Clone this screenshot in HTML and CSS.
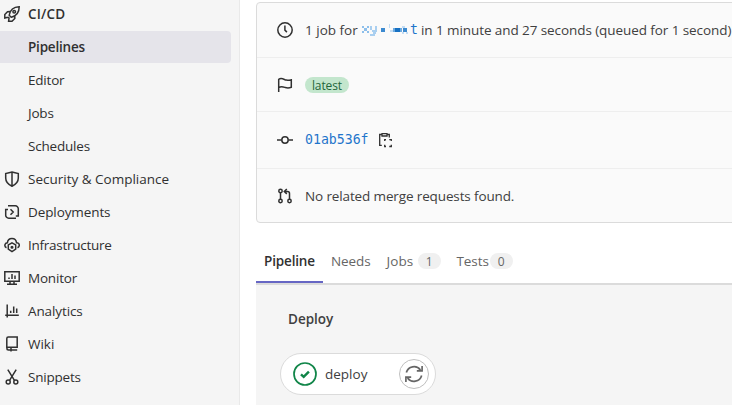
FILE: index.html
```html
<!DOCTYPE html>
<html lang="en">
<head>
<meta charset="utf-8">
<title>Pipeline</title>
<link rel="stylesheet" href="styles.css">
</head>
<body>
<div class="app">
  <nav class="sidebar">
    <a class="item top strong"><svg class="icon" viewBox="0 0 16 16"><path d="M5.2 9.2C6 4.600 9 1 15.200.8 15.200 6.500 12 10.200 7.200 11.200zM6 5.500 3.500 5.700.8 8.500V12l3-.8M10.800 10v2.500L8 15.200H4.600l.4-3M4 11l1.500 1.500"/><circle cx="10.200" cy="5.800" r="1.300"/></svg><span class="label cicd">CI/CD</span></a>
    <a class="item sub active strong"><span class="label">Pipelines</span></a>
    <a class="item sub"><span class="label">Editor</span></a>
    <a class="item sub"><span class="label">Jobs</span></a>
    <a class="item sub"><span class="label">Schedules</span></a>
    <a class="item"><svg class="icon" viewBox="0 0 16 16"><path d="M8 .9 14.300 2.500V7c0 4-2.500 6.500-6.300 8.200C4.200 13.500 1.700 11 1.700 7V2.500zM8 1v14"/></svg><span class="label security">Security &amp; Compliance</span></a>
    <a class="item"><svg class="icon" viewBox="0 0 16 16"><path d="M4 1.800h7.300a3 3 0 0 1 3 3V10M12 14.200H4.700a3 3 0 0 1-3-3V5.500H4M14.300 8.500V12h-2.500M6.500 5.300 9.200 8l-2.700 2.700"/></svg><span class="label deployments">Deployments</span></a>
    <a class="item"><svg class="icon" viewBox="0 0 16 16"><path d="M2.500 10.700C0 9.500.4 6 3.400 5.800 4 .2 11.800.1 12.500 5.700c3.200 0 3.700 3.700 1 5M8 5.800l3.700 2.100v4.300L8 14.600l-3.700-2.400V7.900z"/><circle cx="8" cy="10.200" r=".8"/></svg><span class="label infrastructure">Infrastructure</span></a>
    <a class="item"><svg class="icon" viewBox="0 0 16 16"><path d="M.8 1.700h14.400v9.600H.8zM3 14.300h10M6 11.500v2.700M10 11.500v2.700M5 7.500V9M8 4v5M11 5.500V9"/></svg><span class="label">Monitor</span></a>
    <a class="item"><svg class="icon" viewBox="0 0 16 16"><path d="M3.200 1.500v13M1.200 12.300h13.600M6.700 7.800V10M9.700 3.500V10M12.700 5.500V10"/></svg><span class="label deployments">Analytics</span></a>
    <a class="item"><svg class="icon" viewBox="0 0 16 16"><path d="M13.200 11.300H4.500a1.700 1.700 0 0 0-1.700 1.500V2.500A1.500 1.500 0 0 1 4.300 1h8.900v10.300zM2.800 12.500c0 1 .7 1.500 1.700 1.500h8.700M7 12v3.500"/></svg><span class="label security">Wiki</span></a>
    <a class="item"><svg class="icon" viewBox="0 0 16 16"><path d="m3.800.7 6.800 11M12.200.7l-6.800 11"/><circle cx="4.200" cy="13" r="2"/><circle cx="11.800" cy="13" r="2"/></svg><span class="label">Snippets</span></a>
  </nav>
  <main class="content">
    <section class="card">
      <div class="row summary"><svg class="icon" viewBox="0 0 16 16"><circle cx="8" cy="8" r="7.200"/><path d="M7.900 3.500v4.600l2 2"/></svg><span class="text before">1 job for</span><span class="name"><svg viewBox="0 0 48 12"><path fill="#8dbfeb" d="M0 2h2v2H0zM5 2h2v2H5zM2 4h3v3H2zM0 7h2v2H0zM5 7h2v2H5z"/><path fill="#a9cff0" d="M8 2h2v4H8zM13 2h2v6h-2zM10 6h3v2h-3zM11 8h3v2h-3zM8 10h5v2H8z"/><path fill="#3c8ad0" d="M19 4h4v4h-4zM41 4h4v4h-4z"/><path fill="#c2dcf3" d="M27 0h1v4h-1zM28 6h3v2h-3zM40 2h3v2h-3zM40 8h2v2h-2zM44 8h2v2h-2z"/><path fill="#1670c2" d="M33 4h5v4h-5z"/><path fill="#6caae0" d="M31 4h2v4h-2zM38 4h2v4h-2z"/></svg><span class="mono">t</span></span><span class="text after">in 1 minute and 27 seconds (queued for 1 second)</span></div>
      <div class="row"><svg class="icon" viewBox="0 0 16 16"><path d="M1.700 15V2.300c3-2 5.500.4 7.500.8s3.500 0 5.100-.3v7.500c-2 .7-4 .8-6 .2s-4-1.400-6.600 0"/></svg><span class="badge">latest</span></div>
      <div class="row commit"><svg class="icon" viewBox="0 0 16 16"><circle cx="8" cy="8" r="3.200"/><path d="M0 8h4.500M11.500 8H16"/></svg><span class="mono">01ab536f</span><svg class="icon copy" viewBox="0 0 16 16"><path d="M4.800 13.300H2.700V2.500h2.100M10.200 2.500h2.100v3M5 1.600h5v2.400H5zM9 7.700H7.700V9M12.300 7.700h2V9M7.700 12.800v1.700H9M14.300 12.800v1.700h-2"/></svg></div>
      <div class="row last"><svg class="icon" viewBox="0 0 16 16"><circle cx="3.500" cy="3" r="1.700"/><circle cx="3.500" cy="13" r="1.700"/><circle cx="12.500" cy="13" r="1.700"/><path d="M3.500 5v6M12.500 11V5.500a2 2 0 0 0-2-2H8M9.800 1 7.300 3.500l2.500 2.400"/></svg><span class="text related">No related merge requests found.</span></div>
    </section>
    <div class="tabs">
      <a class="tab selected"><span>Pipeline</span></a>
      <a class="tab needs"><span>Needs</span></a>
      <a class="tab jobs"><span>Jobs</span><b class="count">1</b></a>
      <a class="tab tests"><span>Tests</span><b class="count">0</b></a>
    </div>
    <section class="graph">
      <h2 class="stage">Deploy</h2>
      <div class="job"><svg class="status" viewBox="0 0 24 24"><circle cx="12" cy="12" r="11"/><path d="m8 12.300 2.700 2.600 5.200-5.300"/></svg><span class="jobname">deploy</span><span class="retry"><svg viewBox="0 0 16 16"><path d="M1.200 6.700A7 7 0 0 1 13.700 4.500M14.800 9.300A7 7 0 0 1 2.300 11.500M15.200.8v4.500h-4.700M.8 15.200v-4.500h4.700"/></svg></span></div>
    </section>
  </main>
</div>
</body>
</html>
```
FILE: styles.css
```css
* { box-sizing: border-box; }
body { margin: 0; background: #fff; color: #303030; font: 13.500px/20px "Open Sans", "Noto Sans", sans-serif; }
.app { display: flex; width: 732px; height: 405px; overflow: hidden; }
.sidebar { flex: 0 0 240px; background: #f5f5f5; border-right: 1px solid #e9e9e9; }
.item { display: flex; align-items: center; gap: 8px; height: 32px; margin: 0 8px 1px 0; padding-left: 4px; border-radius: 0 4px 4px 0; letter-spacing: -.2px; white-space: nowrap; }
.item.top { height: 30px; padding-bottom: 2px; }
.item.sub { padding-left: 28px; }
.active { background: #e5e4ea; }
.strong { font-weight: 600; }
.cicd { letter-spacing: .2px; }
.security { letter-spacing: 0; }
.deployments { letter-spacing: -.1px; }
.infrastructure { letter-spacing: -.27px; }
.icon { flex: none; width: 16px; height: 16px; fill: none; stroke: #303030; stroke-width: 1.500; }
.content { flex: 1; min-width: 0; padding: 2px 0 0 16px; }
.card { width: 500px; height: 221px; background: #fafafa; border: 1px solid #dbdbdb; border-radius: 4px; }
.row { display: flex; align-items: center; height: 54px; padding-left: 20px; border-bottom: 1px solid #eee; white-space: nowrap; }
.row.summary { height: 55px; }
.row.commit { height: 57px; }
.row.last { border: 0; height: 53px; }
.text, .badge, .row > .mono { margin-left: 12px; }
.text { color: #404040; letter-spacing: -.13px; }
.name { display: flex; align-items: center; width: 55px; margin-left: 5px; }
.name svg { flex: none; width: 48px; height: 12px; }
.mono { color: #1f75cb; font: 13.200px/20px "DejaVu Sans Mono", monospace; }
.text.before { width: 52px; letter-spacing: 0; }
.text.after { margin-left: 4px; letter-spacing: -.08px; }
.badge { width: 44px; height: 16px; border-radius: 8px; background: #c3e6cd; color: #24663b; font-size: 12px; line-height: 17px; letter-spacing: -.1px; text-align: center; }
.copy { margin-left: 8px; stroke-width: 1.300; }
.tabs { display: flex; height: 62px; padding-top: 16px; border-bottom: 2px solid #dbdbdb; color: #666; }
.tab { display: flex; align-items: center; height: 44px; padding: 0 8px; letter-spacing: -.1px; }
.selected { width: 67px; color: #303030; font-weight: 600; padding-top: 2px; border-bottom: 2px solid #6666c4; letter-spacing: -.15px; }
.jobs span { width: 27px; letter-spacing: .1px; }
.tests span { width: 29px; }
.count { width: 23px; height: 16px; margin-left: 4px; border-radius: 8px; background: #f0f0f0; font-size: 12px; font-weight: 400; line-height: 17px; text-align: center; }
.graph { height: 130px; background: #f5f5f5; padding: 24px 0 0 24px; }
.stage { margin: 0 0 24px 8px; font-size: 13.500px; font-weight: 600; line-height: 20px; color: #404040; }
.job { display: flex; align-items: center; width: 156px; height: 42px; padding: 0 6px 0 12px; background: #fff; border: 1px solid #dbdbdb; border-radius: 21px; }
.status { width: 24px; height: 24px; fill: none; stroke: #108548; stroke-width: 1.700; }
.status path { stroke-width: 2.400; }
.jobname { flex: 1; margin-left: 8px; color: #404040; }
.retry { display: flex; align-items: center; justify-content: center; width: 30px; height: 30px; border: 1px solid #bfbfbf; border-radius: 50%; }
.retry svg { width: 18px; height: 18px; fill: none; stroke: #666; stroke-width: 1.500; }
```
